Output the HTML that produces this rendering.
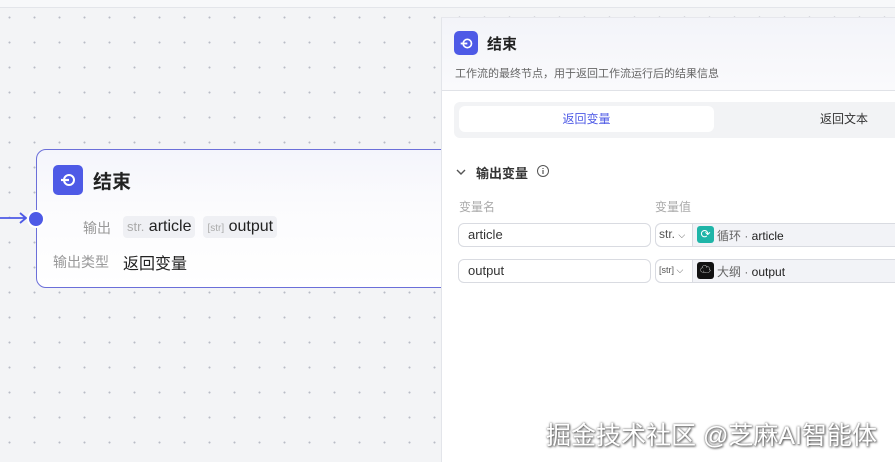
<!DOCTYPE html><html><head><meta charset="utf-8"><style>
*{margin:0;padding:0;box-sizing:border-box}
body{width:895px;height:462px;overflow:hidden;position:relative;font-family:"Liberation Sans","Noto Sans CJK SC",sans-serif;background-color:#f3f4f6;background-image:radial-gradient(circle,#b8bcc6 0.8px,transparent 1.2px);background-size:25px 25px;background-position:-3px 5px}
.top{position:absolute;left:0;top:0;width:895px;height:8px;background:#f7f8fa;border-bottom:1px solid #e3e5ea}
.node{position:absolute;left:36px;top:149px;width:430px;height:139px;background:linear-gradient(180deg,#f4f5fc,#fbfbfd 40%,#fff);border:1px solid #6b6fd9;border-radius:10px}
.ic{position:absolute;background:#4e5ae6;border-radius:5px;display:flex;align-items:center;justify-content:center}
.panel{position:absolute;left:441px;top:17px;width:454px;height:445px;background:#fff;border-left:1px solid #e3e5ea;border-top:1px solid #e6e7ec;z-index:2}
.tag{display:inline-block;background:#eff0f4;border-radius:4px;padding:2px 4px;margin-right:8px}
.inp{position:absolute;height:24px;border:1px solid #d9dbe1;border-radius:6px;background:#fff;font-size:13px;color:#333;padding:3px 9px}
</style></head><body>
<div class="top"></div>
<svg style="position:absolute;left:0;top:210px" width="32" height="16"><path d="M0 8H26M20 3L26 8L20 13" stroke="#4e5ae6" stroke-width="1.8" fill="none"/></svg>
<div class="node">
<div class="ic" style="left:16px;top:15px;width:30px;height:30px"><svg width="18" height="18" viewBox="0 0 18 18"><circle cx="10" cy="9" r="5" stroke="#fff" stroke-width="2" fill="none"/><path d="M2 9H10" stroke="#fff" stroke-width="2.2"/></svg></div>
<div style="position:absolute;left:56px;top:17px;font-size:19px;font-weight:bold;color:#222">结束</div>
<div style="position:absolute;left:46px;top:68px;font-size:14px;color:#999">输出</div>
<div style="position:absolute;left:86px;top:66px;font-size:16px;color:#222"><span class="tag"><span style="color:#aaa;font-size:13px">str.</span> article</span><span class="tag"><span style="color:#aaa;font-size:10px">[str]</span> output</span></div>
<div style="position:absolute;left:16px;top:102px;font-size:14px;color:#999">输出类型</div>
<div style="position:absolute;left:86px;top:100px;font-size:16px;color:#222">返回变量</div>
</div>
<div style="position:absolute;left:27px;top:210px;width:18px;height:18px;border-radius:50%;background:#4e5ae6;border:2px solid #fff"></div>
<div class="panel">
<div style="position:absolute;left:0;top:0;width:454px;height:73px;background:linear-gradient(180deg,#f3f4f9,#fafafc);border-bottom:1px solid #e0e2e7"></div>
<div class="ic" style="left:12px;top:13px;width:24px;height:24px"><svg width="15" height="15" viewBox="0 0 18 18"><circle cx="10" cy="9" r="5" stroke="#fff" stroke-width="2" fill="none"/><path d="M2 9H10" stroke="#fff" stroke-width="2.2"/></svg></div>
<div style="position:absolute;left:45px;top:15px;font-size:15px;font-weight:bold;color:#222">结束</div>
<div style="position:absolute;left:13px;top:47px;font-size:11px;color:#666">工作流的最终节点，用于返回工作流运行后的结果信息</div>
<div style="position:absolute;left:12px;top:84px;width:442px;height:36px;background:#f2f3f5;border-radius:6px 0 0 6px"></div>
<div style="position:absolute;left:17px;top:88px;width:255px;height:26px;background:#fff;border-radius:6px;text-align:center;font-size:12px;line-height:26px;color:#4e5ae6">返回变量</div>
<div style="position:absolute;left:378px;top:88px;font-size:12px;line-height:26px;color:#333">返回文本</div>
<svg style="position:absolute;left:14px;top:150px" width="10" height="8"><path d="M1 2L5 6L9 2" stroke="#555" stroke-width="1.4" fill="none"/></svg>
<div style="position:absolute;left:34px;top:145px;font-size:13px;font-weight:bold;color:#333">输出变量</div>
<svg style="position:absolute;left:94px;top:146px" width="14" height="14"><circle cx="7" cy="7" r="5.5" stroke="#555" fill="none"/><path d="M7 6V10M7 4V5" stroke="#555" stroke-width="1.2"/></svg>
<div style="position:absolute;left:17px;top:180px;font-size:12px;color:#aaa">变量名</div>
<div style="position:absolute;left:213px;top:180px;font-size:12px;color:#aaa">变量值</div>
<div class="inp" style="left:16px;top:205px;width:193px">article</div>
<div class="inp" style="left:16px;top:241px;width:193px">output</div>
<div class="inp" style="left:213px;top:205px;width:250px;padding:0;background:#f2f3f7"><div style="position:absolute;left:0;top:0;width:37px;height:22px;background:#fff;border-radius:6px 0 0 6px;border-right:1px solid #d9dbe1;font-size:12px;padding:3px 3px;color:#555">str. <span style="font-size:9px">⌵</span></div><div style="position:absolute;left:41px;top:2px;width:17px;height:17px;background:#1fb5a8;border-radius:3px;color:#fff;font-size:12px;text-align:center;line-height:17px">⟳</div><div style="position:absolute;left:61px;top:3px;font-size:12px;color:#222"><span style="color:#666">循环 ·</span> article</div></div>
<div class="inp" style="left:213px;top:241px;width:250px;padding:0;background:#f2f3f7"><div style="position:absolute;left:0;top:0;width:37px;height:22px;background:#fff;border-radius:6px 0 0 6px;border-right:1px solid #d9dbe1;font-size:9px;padding:5px 3px;color:#555">[str] ⌵</div><div style="position:absolute;left:41px;top:2px;width:17px;height:17px;background:#111;border-radius:3px;color:#fff;font-size:11px;text-align:center;line-height:17px">☁</div><div style="position:absolute;left:61px;top:3px;font-size:12px;color:#222"><span style="color:#666">大纲 ·</span> output</div></div>
</div>
<div style="position:absolute;left:546px;top:416px;font-size:25px;color:#fff;text-shadow:0 0 2px #666,1px 1px 2px #555;z-index:3;white-space:nowrap">掘金技术社区 @芝麻AI智能体</div>
</body></html>
